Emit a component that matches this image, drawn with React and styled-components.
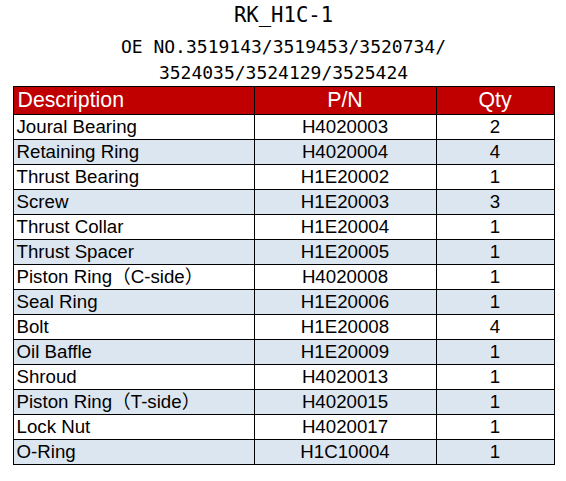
import React from 'react'
import styled, { createGlobalStyle } from 'styled-components';

const GlobalStyle = createGlobalStyle`
body {
    margin: 0;
    background: #ffffff;
}
`

const Wrapper = styled.div`
display: flex;
flex-direction: column;
align-items: center;
padding: 0 12px 0 13px;
`

const Title = styled.div`
font-family: "DejaVu Sans Mono", monospace;
font-size: 20.6px;
line-height: 30px;
height: 30px;
color: #000;
margin-bottom: 4px;
`

const SubTitle = styled.div`
font-family: "DejaVu Sans Mono", monospace;
font-size: 18px;
line-height: 26px;
color: #000;
text-align: center;
`

const Table = styled.table`
border-collapse: collapse;
width: 541px;
table-layout: fixed;
font-family: "Liberation Sans", Arial, "Noto Sans CJK SC", sans-serif;
color: #000;
`

const HeadCell = styled.th`
background: #c00000;
color: #ffffff;
font-weight: normal;
font-size: 21.3px;
height: 27px;
padding: 0 4px;
border: 1px solid #000;
text-align: ${props => props.align || 'center'};
line-height: 27px;
`

const Row = styled.tr`
background: ${props => props.shaded ? '#dce6f1' : '#ffffff'};
`

const Cell = styled.td`
font-size: 18.7px;
height: 24px;
line-height: 24px;
padding: 0 3px;
border: 1px solid #000;
white-space: nowrap;
text-align: ${props => props.align || 'center'};
`

const parts = [
    ['Joural Bearing', 'H4020003', 2],
    ['Retaining Ring', 'H4020004', 4],
    ['Thrust Bearing', 'H1E20002', 1],
    ['Screw', 'H1E20003', 3],
    ['Thrust Collar', 'H1E20004', 1],
    ['Thrust Spacer', 'H1E20005', 1],
    ['Piston Ring（C-side）', 'H4020008', 1],
    ['Seal Ring', 'H1E20006', 1],
    ['Bolt', 'H1E20008', 4],
    ['Oil Baffle', 'H1E20009', 1],
    ['Shroud', 'H4020013', 1],
    ['Piston Ring（T-side）', 'H4020015', 1],
    ['Lock Nut', 'H4020017', 1],
    ['O-Ring', 'H1C10004', 1],
]

const App = () => (
    <Wrapper>
        <GlobalStyle />
        <Title>RK_H1C-1</Title>
        <SubTitle>OE NO.3519143/3519453/3520734/</SubTitle>
        <SubTitle>3524035/3524129/3525424</SubTitle>
        <Table>
            <colgroup>
                <col style={{ width: 241 }} />
                <col style={{ width: 182 }} />
                <col style={{ width: 118 }} />
            </colgroup>
            <thead>
                <tr>
                    <HeadCell align="left">Description</HeadCell>
                    <HeadCell>P/N</HeadCell>
                    <HeadCell>Qty</HeadCell>
                </tr>
            </thead>
            <tbody>
                {parts.map((part, index) => (
                    <Row key={index.toString()} shaded={index % 2 === 1}>
                        <Cell align="left">{part[0]}</Cell>
                        <Cell>{part[1]}</Cell>
                        <Cell>{part[2]}</Cell>
                    </Row>
                ))}
            </tbody>
        </Table>
    </Wrapper>
);

export default App;
